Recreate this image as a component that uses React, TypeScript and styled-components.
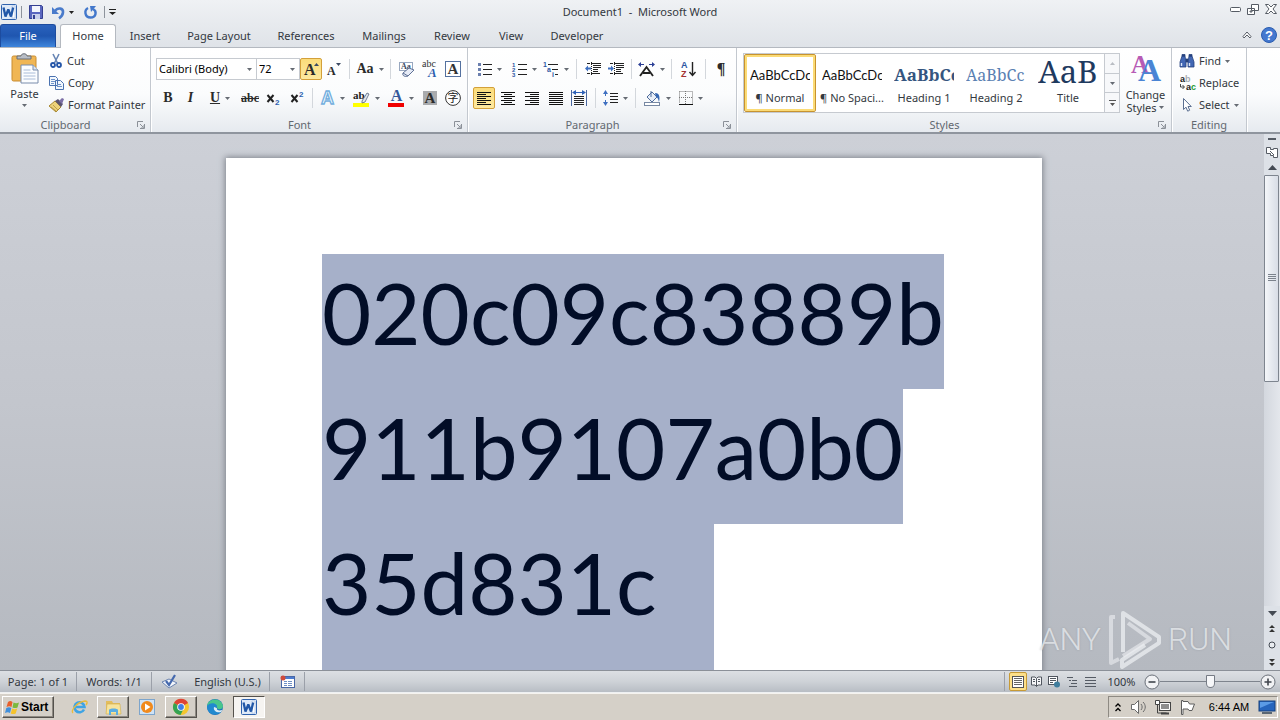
import React from 'react';
import styled, { createGlobalStyle, css } from 'styled-components';

const GlobalStyle = createGlobalStyle`
  * { box-sizing: border-box; }
  html, body, #root { height: 100%; }
  body {
    margin: 0;
    font-family: "Noto Sans", "Open Sans", sans-serif;
    font-size: 11px;
    line-height: 14px;
    color: #333840;
    overflow: hidden;
  }
  button, select, input { font: inherit; color: inherit; margin: 0; }
  svg { display: block; flex: none; overflow: visible; }
`;

/* ---------- window frame ---------- */

const Window = styled.div`
  display: flex;
  flex-direction: column;
  height: 100%;
`;

const TopChrome = styled.header`
  background: linear-gradient(#eff1f4, #dfe3e8);
`;

const TitleBar = styled.div`
  display: grid;
  grid-template-columns: 1fr auto 1fr;
  align-items: center;
  height: 24px;
`;

const Title = styled.h1`
  margin: 0;
  font-size: 11px;
  font-weight: 400;
  white-space: pre;
`;

const QuickAccess = styled.div`
  display: flex;
  align-items: center;
  gap: 4px;
  padding-left: 1px;
`;

const PlainButton = styled.button<{ $w?: number }>`
  display: flex;
  align-items: center;
  justify-content: center;
  gap: 4px;
  width: ${p => (p.$w ? `${p.$w}px` : 'auto')};
  padding: 0;
  border: 0;
  background: none;
  white-space: nowrap;
`;

const ThinRule = styled.span`
  width: 1px;
  height: 12px;
  background: #8d939c;
`;

const WindowControls = styled.div`
  display: flex;
  justify-content: flex-end;
  align-items: center;
  gap: 6px;
  padding: 0 3px 6px 0;
`;

const TabBar = styled.nav`
  display: flex;
  align-items: flex-end;
  height: 24px;
  border-bottom: 1px solid #b4b9c0;
`;

const Tab = styled.button<{ $w: number; $kind?: 'file' | 'active' }>`
  width: ${p => p.$w}px;
  height: 23px;
  padding: 0;
  border: 1px solid transparent;
  border-bottom: 0;
  border-radius: 3px 3px 0 0;
  background: none;
  ${p => p.$kind === 'file' && css`
    margin-right: 4px;
    color: #fff;
    border-color: #1d4c9f;
    background: linear-gradient(#2a62bd, #1f56b0 50%, #3f86dc);
  `}
  ${p => p.$kind === 'active' && css`
    height: 24px;
    margin-bottom: -1px;
    padding-bottom: 1px;
    border-color: #b4b9c0;
    background: #fff;
  `}
`;

const TabBarEnd = styled.div`
  display: flex;
  align-items: center;
  gap: 9px;
  height: 24px;
  margin-left: auto;
  padding-right: 3px;
`;

/* ---------- ribbon ---------- */

const Ribbon = styled.div`
  display: flex;
  height: 86px;
  background: linear-gradient(#fff, #fbfcfd 55%, #e6eaef);
  border-bottom: 2px solid #8f959e;
`;

const Group = styled.section<{ $w: number }>`
  display: flex;
  flex-direction: column;
  width: ${p => p.$w}px;
  border-right: 1px solid #c3c8cf;
  box-shadow: 1px 0 0 #fff;
`;

const GroupBody = styled.div`
  display: flex;
  flex: 1;
  min-height: 0;
`;

const GroupFooter = styled.div`
  display: flex;
  align-items: center;
  height: 15px;
  text-align: center;
  color: #626870;
`;

const GroupName = styled.span`
  flex: 1;
`;

const ToolRows = styled.div<{ $left: number }>`
  display: flex;
  flex-direction: column;
  gap: 7px;
  padding: 10px 0 0 ${p => p.$left}px;
`;

const ToolRow = styled.div`
  display: flex;
  align-items: center;
  height: 22px;
`;

const Tool = styled.button<{ $w: number; $on?: boolean }>`
  display: flex;
  align-items: center;
  justify-content: center;
  gap: 5px;
  width: ${p => p.$w}px;
  height: 22px;
  padding: 0;
  border: 1px solid transparent;
  border-radius: 2px;
  background: none;
  ${p => p.$on && css`
    border-color: #d3a03a;
    background: linear-gradient(#fbdc7a, #fde9a0);
  `}
`;

const ToolSeparator = styled.span<{ $w: number }>`
  display: flex;
  justify-content: center;
  width: ${p => p.$w}px;
  height: 20px;
  &::before {
    content: '';
    width: 1px;
    background: #d3d7dc;
  }
`;

const Glyph = styled.span<{ $size?: number }>`
  font-family: "Liberation Serif", serif;
  font-size: ${p => p.$size ?? 14}px;
  font-weight: 700;
  line-height: 14px;
  color: #2b2b2b;
`;

const StruckGlyph = styled(Glyph)`
  text-decoration: line-through;
`;

const ItalicGlyph = styled(Glyph)`
  font-style: italic;
`;

const UnderlinedGlyph = styled(Glyph)`
  text-decoration: underline;
`;

const ComboBox = styled.label<{ $w: number }>`
  display: flex;
  align-items: center;
  width: ${p => p.$w}px;
  height: 22px;
  padding-right: 4px;
  border: 1px solid #c6cad0;
  background: #fff;
  & + & { margin-left: -1px; }
`;

const ComboSelect = styled.select`
  flex: 1;
  min-width: 0;
  padding: 0 0 0 2px;
  border: 0;
  outline: 0;
  background: none;
  appearance: none;
  color: #000;
`;

const PasteButton = styled.button`
  display: flex;
  flex-direction: column;
  align-items: center;
  gap: 3px;
  width: 49px;
  padding: 5px 0 0;
  border: 0;
  background: none;
`;

const CommandList = styled.div<{ $left: number }>`
  display: flex;
  flex-direction: column;
  gap: 8px;
  padding: 6px 0 0 ${p => p.$left}px;
`;

const Command = styled.button`
  display: flex;
  align-items: center;
  gap: 4px;
  height: 14px;
  padding: 0;
  border: 0;
  background: none;
  white-space: nowrap;
`;

const Gallery = styled.div`
  display: flex;
  align-self: flex-start;
  height: 60px;
  margin: 5px 0 0 6px;
  border: 1px solid #c6cad0;
  background: #fff;
`;

const StyleCard = styled.button<{ $on?: boolean }>`
  display: flex;
  flex-direction: column;
  align-items: center;
  justify-content: flex-end;
  gap: 1px;
  width: 72px;
  height: 58px;
  padding: 0 4px 5px;
  border: 2px solid transparent;
  border-radius: 2px;
  background: none;
  ${p => p.$on && css`
    border: 1px solid #c7932f;
    padding: 0 5px 6px;
    box-shadow: inset 0 0 0 2px #fbdb76;
  `}
`;

const StylePreview = styled.span<{ $color: string; $size: number; $serif?: boolean; $bold?: boolean; $h?: number }>`
  width: 60px;
  height: ${p => p.$h ?? 30}px;
  overflow: hidden;
  text-align: left;
  white-space: nowrap;
  font-family: ${p => (p.$serif ? '"Noto Serif", "DejaVu Serif", "Liberation Serif", serif' : 'Lato, sans-serif')};
  font-size: ${p => p.$size}px;
  font-weight: ${p => (p.$bold ? 700 : 400)};
  line-height: 30px;
  color: ${p => p.$color};
`;

const StyleLabel = styled.span`
  white-space: nowrap;
`;

const GalleryScroll = styled.div`
  display: flex;
  flex-direction: column;
  width: 15px;
  border-left: 1px solid #c6cad0;
`;

const GalleryScrollButton = styled.button`
  display: flex;
  flex: 1;
  align-items: center;
  justify-content: center;
  padding: 0;
  border: 0;
  background: #f7f8fa;
  & + & { border-top: 1px solid #c6cad0; }
`;

const ChangeStyles = styled.button`
  display: flex;
  flex-direction: column;
  align-items: center;
  flex: 1;
  padding: 6px 0 0;
  border: 0;
  background: none;
  line-height: 13px;
  gap: 5px;
`;

const InlineCaret = styled.span`
  display: inline-flex;
  align-items: center;
  gap: 3px;
`;

/* ---------- document ---------- */

const Workspace = styled.div`
  position: relative;
  display: flex;
  flex: 1;
  min-height: 0;
  background: linear-gradient(#cdd0d7, #c3c6cd 50%, #b5b9c0);
`;

const Canvas = styled.main`
  display: flex;
  flex: 1;
  justify-content: center;
  min-width: 0;
  padding: 24px 0 0 4px;
  overflow: hidden;
`;

const Page = styled.article`
  flex: none;
  width: 816px;
  min-height: 1056px;
  padding: 96px;
  background: #fff;
  box-shadow: 0 0 6px 1px #7f848c;
`;

const SelectedLine = styled.div<{ $tail?: boolean }>`
  width: fit-content;
  height: ${p => (p.$tail ? 270 : 135)}px;
  padding-right: ${p => (p.$tail ? 57 : 0)}px;
  font-family: Lato, sans-serif;
  font-size: 85px;
  line-height: 116px;
  white-space: nowrap;
  color: #020d27;
  background: #a6b0c9;
`;

const ScrollRail = styled.div`
  display: flex;
  flex-direction: column;
  align-items: center;
  width: 16px;
  background: #dfe3e9;
`;

const RailButton = styled.button<{ $h: number }>`
  display: flex;
  align-items: center;
  justify-content: center;
  width: 16px;
  height: ${p => p.$h}px;
  padding: 0;
  border: 0;
  background: #dde1e7;
`;

const RailTrack = styled.div`
  flex: 1;
  width: 16px;
  background: linear-gradient(90deg, #d3d7de, #e4e7ec);
`;

const RailThumb = styled.div`
  display: flex;
  align-items: center;
  justify-content: center;
  width: 15px;
  height: 48%;
  border: 1px solid #7e858f;
  border-radius: 1px;
  background: linear-gradient(90deg, #f4f6f9, #e3e7ee 60%, #d8dde6);
`;

const Watermark = styled.div`
  position: absolute;
  right: 48px;
  bottom: 0;
  display: flex;
  align-items: center;
  gap: 6px;
  font-family: Roboto, sans-serif;
  font-size: 32px;
  font-weight: 300;
  line-height: 60px;
  color: rgba(236, 239, 242, 0.75);
  text-shadow: 0 0 2px rgba(120, 125, 132, 0.4);
`;

/* ---------- status bar ---------- */

const StatusBar = styled.footer`
  display: flex;
  align-items: center;
  height: 23px;
  border-top: 1px solid #8b9098;
  border-bottom: 1px solid #eef0f2;
  background: linear-gradient(#dcdfe3, #ced2d7 50%, #b8bdc4);
`;

const StatusItem = styled.button<{ $w: number }>`
  display: flex;
  align-items: center;
  justify-content: center;
  width: ${p => p.$w}px;
  height: 19px;
  padding: 0;
  border: 0;
  border-right: 1px solid #9ba0a9;
  background: none;
  white-space: nowrap;
`;

const ViewControls = styled.div`
  display: flex;
  align-items: center;
  height: 19px;
  margin-left: auto;
  padding: 0 4px;
  border-left: 1px solid #9ba0a9;
`;

const ViewButton = styled.button<{ $on?: boolean }>`
  display: flex;
  align-items: center;
  justify-content: center;
  width: 18px;
  height: 19px;
  padding: 0;
  border: 1px solid ${p => (p.$on ? '#c79a35' : 'transparent')};
  border-radius: 2px;
  background: ${p => (p.$on ? '#fde08a' : 'none')};
`;

const ZoomLevel = styled.button`
  width: 45px;
  padding: 0;
  border: 0;
  background: none;
`;

const ZoomSlider = styled.input`
  width: 100px;
  height: 16px;
  appearance: none;
  background: linear-gradient(#7e848d, #7e848d) center / 100% 1px no-repeat;
  &::-webkit-slider-thumb {
    appearance: none;
    width: 9px;
    height: 13px;
    border: 1px solid #757b84;
    border-radius: 1px 1px 5px 5px;
    background: #f6f7f9;
  }
`;

/* ---------- taskbar ---------- */

const Taskbar = styled.nav`
  display: flex;
  align-items: center;
  height: 27px;
  padding: 0 2px;
  border-top: 1px solid #f5f3ef;
  background: #d5d0c8;
`;

const raised = css`
  border: 1px solid;
  border-color: #fff #55524d #55524d #fff;
  box-shadow: inset -1px -1px 0 #8e8a83;
`;

const StartButton = styled.button`
  display: flex;
  align-items: center;
  gap: 1px;
  width: 52px;
  height: 22px;
  margin-right: 8px;
  padding: 0 2px;
  background: #d5d0c8;
  color: #000;
  font-family: "Liberation Sans", sans-serif;
  font-size: 12px;
  font-weight: 700;
  ${raised}
`;

const TaskButton = styled.button<{ $state?: 'open' | 'front' }>`
  display: flex;
  align-items: center;
  justify-content: center;
  width: ${p => (p.$state ? 32 : 34)}px;
  height: 22px;
  margin: 0 ${p => (p.$state ? 1 : 0)}px;
  padding: 0;
  border: 1px solid transparent;
  background: none;
  ${p => p.$state === 'open' && raised}
  ${p => p.$state === 'front' && css`
    border-color: #55524d #fff #fff #55524d;
    background: #f6f4f1;
  `}
`;

const Tray = styled.div`
  display: flex;
  align-items: center;
  height: 22px;
  margin-left: auto;
  border: 1px solid;
  border-color: #8e8a83 #fff #fff #8e8a83;
  color: #000;
`;

const TrayButton = styled.button<{ $w: number }>`
  display: flex;
  align-items: center;
  justify-content: center;
  width: ${p => p.$w}px;
  height: 20px;
  padding: 0;
  border: 0;
  background: none;
`;

const Clock = styled.time`
  width: 56px;
  font-family: "Liberation Sans", sans-serif;
  text-align: center;
  white-space: nowrap;
`;

/* ---------- drawings ---------- */

const Caret = ({ color = '#666b73', up = false }: { color?: string; up?: boolean }) => (
  <svg width="5" height="3" viewBox="0 0 5 3"><path d={up ? 'M0 3h5L2.5 0z' : 'M0 0h5L2.5 3z'} fill={color} /></svg>
);

const Launcher = () => (
  <svg width="8" height="8" viewBox="0 0 8 8" fill="none" stroke="#8b9098">
    <path d="M.5 6V.5H6M3 3l3 3M7.5 3v4.5H3M7 4v3H4" />
  </svg>
);

const WordIcon = ({ size = 16 }: { size?: number }) => (
  <svg width={size} height={size} viewBox="0 0 16 16">
    <rect x=".5" y=".5" width="15" height="15" rx="1" fill="#dfeaf8" stroke="#2f62ad" />
    <rect x="11" y="2" width="3" height="12" fill="#fff" stroke="#8aabda" strokeWidth=".5" />
    <path d="M2.500 3.500l2 9L7.300 5.500 10 12.500l2.200-9" fill="none" stroke="#2258a8" strokeWidth="2.300" strokeLinejoin="bevel" />
  </svg>
);

const SaveIcon = () => (
  <svg width="14" height="14" viewBox="0 0 14 14">
    <path d="M.5.5h12l1 1v12H.5z" fill="#5a66bf" stroke="#343f91" />
    <rect x="3" y="1" width="8" height="6" fill="#f3f5fc" /><rect x="3" y="9" width="8" height="5" fill="#c9cfeb" /><rect x="4" y="10" width="2" height="4" fill="#343f91" />
  </svg>
);

const UndoIcon = () => (
  <svg width="13" height="13" viewBox="0 0 13 13">
    <path d="M2.500 5.500C6 1 11.500 2 11 6.500 10.700 9 9 11 7 12.300" fill="none" stroke="#4a7bcb" strokeWidth="2.600" />
    <path d="M0 1v7h7z" fill="#4a7bcb" />
  </svg>
);

const RedoIcon = () => (
  <svg width="13" height="13" viewBox="0 0 13 13">
    <path d="M4 2C0 4 .5 11.500 6.500 11.500S13 5 9 3" fill="none" stroke="#4277cb" strokeWidth="2.400" />
    <path d="M6 0h6L7 6z" fill="#4277cb" />
  </svg>
);

const PasteIcon = () => (
  <svg width="28" height="31" viewBox="0 0 28 31">
    <rect x="1" y="3" width="24" height="25" rx="1.500" fill="#f0b654" stroke="#c88c31" />
    <path d="M6 6V3h4c0-3 6-3 6 0h4v3z" fill="#b9bec6" stroke="#686e77" />
    <path d="M10 12h12l5 5v13H10z" fill="#fbfdff" stroke="#788cab" />
    <path d="M22 12v5h5" fill="#dbe5f2" stroke="#788cab" />
    <path d="M12.500 17h7M12.500 20h12M12.500 23h12M12.500 26h12" stroke="#a9bcd8" />
  </svg>
);

const CutIcon = () => (
  <svg width="14" height="14" viewBox="0 0 14 14" fill="none">
    <path d="M4 0l4.500 9M10 0L5.500 9" stroke="#6886b5" strokeWidth="1.600" />
    <circle cx="4" cy="11" r="2" stroke="#2456a8" strokeWidth="1.800" /><circle cx="10" cy="11" r="2" stroke="#2456a8" strokeWidth="1.800" />
  </svg>
);

const CopyIcon = () => (
  <svg width="15" height="14" viewBox="0 0 15 14" fill="#f2f7fd" stroke="#4a72b0">
    <path d="M.5.5h6l2 2v7h-8zM6.500 4.500h5l3 3v6h-8z" />
    <path d="M2 3.500h4M2 5.500h4M2 7.500h3M8 8.500h4M8 10.500h5" stroke="#6e93c9" />
  </svg>
);

const BrushIcon = () => (
  <svg width="15" height="14" viewBox="0 0 15 14">
    <path d="M0 8l6-5 6 6-5 5z" fill="#ecd27a" stroke="#a98a35" />
    <path d="M2 9l5 4M4 7l5 5" stroke="#a98a35" strokeWidth=".7" />
    <path d="M6 3l3-2 5 5-2 3z" fill="#5a5471" /><path d="M10 3l3-3 2 1-2 5z" fill="#7c6fa6" />
  </svg>
);

const EraserIcon = () => (
  <svg width="17" height="17" viewBox="0 0 17 17">
    <rect x="1.500" y="1.500" width="13" height="8" fill="#fff" stroke="#98a7bf" />
    <text x="3" y="8" fontSize="8" fontWeight="700" fontFamily="Liberation Serif, serif" fill="#38465f">Aa</text>
    <path d="M5 12l6-5 5 2-6 6c-3 1-6 0-5-3z" fill="#e6ebf6" stroke="#5f7196" />
    <path d="M5 12l5 3" stroke="#5f7196" />
  </svg>
);

const PhoneticIcon = () => (
  <svg width="17" height="17" viewBox="0 0 17 17">
    <text x="0" y="6" fontSize="10" fontFamily="Liberation Serif, serif" fill="#333">abc</text>
    <text x="6" y="16" fontSize="13" fontStyle="italic" fontWeight="700" fontFamily="Liberation Serif, serif" fill="#2d5fb0">A</text>
  </svg>
);

const BoxedIcon = () => (
  <svg width="16" height="16" viewBox="0 0 16 16">
    <rect x=".5" y=".5" width="15" height="15" fill="#fff" stroke="#54719f" />
    <text x="8" y="13" textAnchor="middle" fontSize="15" fontWeight="700" fontFamily="Liberation Serif, serif" fill="#333">A</text>
  </svg>
);

const ShadedIcon = () => (
  <svg width="14" height="14" viewBox="0 0 14 14">
    <rect width="14" height="14" fill="#a9abae" />
    <text x="7" y="12" textAnchor="middle" fontSize="15" fontWeight="700" fontFamily="Liberation Serif, serif" fill="#2b2b2b">A</text>
  </svg>
);

const CircledIcon = () => (
  <svg width="16" height="16" viewBox="0 0 16 16">
    <circle cx="8" cy="8" r="7.400" fill="#fff" stroke="#333" />
    <text x="8" y="12" textAnchor="middle" fontSize="11" fontFamily="Noto Sans CJK SC, sans-serif" fill="#222">字</text>
  </svg>
);

const TextEffectIcon = () => (
  <svg width="15" height="16" viewBox="0 0 15 16">
    <text x="7.500" y="14" textAnchor="middle" fontSize="18" fontWeight="700" fontFamily="Liberation Sans, sans-serif" fill="#f4faff" stroke="#72aedd" strokeWidth="1.300">A</text>
  </svg>
);

const HighlightIcon = () => (
  <svg width="17" height="17" viewBox="0 0 17 17">
    <rect x="0" y="13" width="16" height="4" fill="#ffff00" />
    <text x="0" y="9" fontSize="11" fontFamily="Liberation Serif, serif" fontWeight="700" fill="#222">ab</text>
    <path d="M9 11l5-8 2 1-4 8-3 1z" fill="#dfe5ee" stroke="#55647e" strokeWidth=".8" />
  </svg>
);

const FontColorIcon = () => (
  <svg width="16" height="17" viewBox="0 0 16 17">
    <rect x="0" y="13" width="16" height="4" fill="#f00000" />
    <text x="8.500" y="11" textAnchor="middle" fontSize="16" fontFamily="Liberation Serif, serif" fontWeight="700" fill="#35589a">A</text>
  </svg>
);

const ScriptIcon = ({ up }: { up?: boolean }) => (
  <svg width="14" height="14" viewBox="0 0 14 14">
    <path d="M1.500 4l6 7M7.500 4l-6 7" stroke="#222" strokeWidth="2" />
    <text x="9" y={up ? 6 : 14} fontSize="8" fontWeight="700" fontFamily="Liberation Sans, sans-serif" fill="#2d5fb0">2</text>
  </svg>
);

const GrowIcon = ({ size, up }: { size: number; up?: boolean }) => (
  <svg width="15" height="16" viewBox="0 0 15 16">
    <text x="0" y="14" fontSize={size} fontWeight="700" fontFamily="Liberation Serif, serif" fill="#2b2b2b">A</text>
    <path d={up ? 'M10 5h5l-2.500-3z' : 'M9 2h5l-2.500 3z'} fill="#3c4a63" />
  </svg>
);

const BulletsIcon = () => (
  <svg width="14" height="14" viewBox="0 0 14 14">
    <path d="M5 2.500h9M5 7.500h9M5 12.500h9" stroke="#222" />
    <path d="M0 1h3v3H0zM0 6h3v3H0zM0 11h3v3H0z" fill="#6b7fae" />
  </svg>
);

const NumbersIcon = () => (
  <svg width="15" height="15" viewBox="0 0 15 15">
    <path d="M6 2.500h9M6 7.500h9M6 12.500h9" stroke="#222" />
    <g fontSize="6" fontWeight="700" fontFamily="Liberation Sans, sans-serif" fill="#2b55a2"><text x="0" y="5">1</text><text x="0" y="10">2</text><text x="0" y="15">3</text></g>
  </svg>
);

const MultilevelIcon = () => (
  <svg width="16" height="15" viewBox="0 0 16 15">
    <path d="M5 2.500h10M9 7.500h6M12 12.500h3" stroke="#222" />
    <g fontSize="7" fontWeight="700" fontFamily="Liberation Sans, sans-serif" fill="#2b55a2"><text x="0" y="5">1</text><text x="4" y="10">a</text><text x="9" y="15">i</text></g>
  </svg>
);

const IndentIcon = ({ out }: { out?: boolean }) => (
  <svg width="16" height="14" viewBox="0 0 16 14">
    <path d="M2 1.500h3M6 1.500h10M8 3.500h8M8 5.500h8M8 7.500h5M8 9.500h5M2 11.500h3M6 11.500h9" stroke="#222" />
    <path d="M6.500 0v14" stroke="#222" strokeDasharray="1 1" />
    <path d={out ? 'M0 6.500l3-3v2h3v2H3v2z' : 'M6 6.500l-3-3v2H0v2h3v2z'} fill="#3e6fc0" />
  </svg>
);

const AsianLayoutIcon = () => (
  <svg width="17" height="15" viewBox="0 0 17 15" fill="none" stroke="#222">
    <path d="M2 14L8.500 5 15 14M5 11h7" strokeWidth="1.900" />
    <path d="M1 2.500h5M11 2.500h5" stroke="#2b3f96" />
    <path d="M3 0v5L0 2.500zM14 0v5l3-2.500z" fill="#2b3f96" stroke="none" />
  </svg>
);

const SortIcon = () => (
  <svg width="15" height="16" viewBox="0 0 15 16">
    <text x="0" y="7" fontSize="9" fontWeight="700" fontFamily="Liberation Sans, sans-serif" fill="#2b55a2">A</text>
    <text x="0" y="16" fontSize="9" fontWeight="700" fontFamily="Liberation Sans, sans-serif" fill="#a33232">Z</text>
    <path d="M11.500 1v13M8.500 11l3 3.500 3-3.500" fill="none" stroke="#222" strokeWidth="1.400" />
  </svg>
);

const alignPaths = {
  left: 'M0 .5h14M0 2.500h9M0 4.500h14M0 6.500h9M0 8.500h14M0 10.500h9M0 12.500h14',
  center: 'M0 .5h14M3 2.500h8M0 4.500h14M3 6.500h8M0 8.500h14M3 10.500h8M0 12.500h14',
  right: 'M0 .5h14M5 2.500h9M0 4.500h14M5 6.500h9M0 8.500h14M5 10.500h9M0 12.500h14',
  justify: 'M0 .5h14M0 2.500h14M0 4.500h14M0 6.500h14M0 8.500h14M0 10.500h14M0 12.500h14',
};

const AlignIcon = ({ kind }: { kind: keyof typeof alignPaths }) => (
  <svg width="14" height="13" viewBox="0 0 14 13"><path d={alignPaths[kind]} stroke="#111" /></svg>
);

const DistributeIcon = () => (
  <svg width="16" height="16" viewBox="0 0 16 16" fill="none">
    <path d="M.5 0v16M15.500 0v16" stroke="#4b68a0" />
    <path d="M2 2.500h12" stroke="#2f62b8" /><path d="M5 0v5L1 2.500zM11 0v5l4-2.500z" fill="#2f62b8" />
    <path d="M3 6.500h10M3 8.500h10M3 10.500h10M3 12.500h10M3 14.500h10" stroke="#222" />
  </svg>
);

const SpacingIcon = () => (
  <svg width="15" height="16" viewBox="0 0 15 16">
    <path d="M7 3.500h8M7 6.500h8M7 9.500h8M7 12.500h8" stroke="#222" />
    <path d="M2.500 0l2.500 4H0zM2.500 16L0 12h5zM2 4h1v2H2zM2 10h1v2H2z" fill="#3e6fc0" />
  </svg>
);

const BucketIcon = () => (
  <svg width="17" height="16" viewBox="0 0 17 16">
    <path d="M3 7l5-5 5 5-5 5z" fill="#e8eef7" stroke="#4f6c9c" />
    <path d="M7 1v6" stroke="#4f6c9c" /><path d="M11 3c5 0 5 5 4 9-1-4-2-5-3-5z" fill="#3466b2" />
    <rect x=".5" y="12.500" width="15" height="3" fill="#fff" stroke="#7788a3" />
  </svg>
);

const BordersIcon = () => (
  <svg width="14" height="14" viewBox="0 0 14 14" fill="none">
    <path d="M.5.5h13v12M.5.5v12M6.500 0v13M0 6.500h13" stroke="#777" strokeDasharray="1 1" />
    <path d="M0 13.500h14" stroke="#111" />
  </svg>
);

const ChangeStylesIcon = () => (
  <svg width="32" height="29" viewBox="0 0 32 29" fontFamily="Liberation Serif, serif" fontWeight="700">
    <text x="1" y="19" fontSize="25" fill="#b75bb5">A</text>
    <text x="8" y="27" fontSize="32" fill="#4a84d4">A</text>
  </svg>
);

const BinocularsIcon = () => (
  <svg width="16" height="14" viewBox="0 0 16 14" stroke="#26437f" strokeWidth=".8">
    <path d="M1 8l2-6h3l1 6v5H1zM9 8l1-6h3l2 6v5H9z" fill="#4267b4" />
    <path d="M7 5h2v3H7zM3 .5h3V2H3zM10 .5h3V2h-3z" fill="#26437f" /><path d="M2.500 9v3M10.500 9v3" stroke="#dce7fb" strokeWidth="1.400" />
  </svg>
);

const ReplaceIcon = () => (
  <svg width="16" height="15" viewBox="0 0 16 15" fontFamily="Liberation Sans, sans-serif" fontWeight="700">
    <text x="1" y="6" fontSize="9" fill="#222">a</text><text x="6" y="6" fontSize="9" fill="#a9adb3">b</text>
    <text x="7" y="14" fontSize="9" fill="#222">a</text><text x="12" y="14" fontSize="9" fill="#239b35">c</text>
    <path d="M1.500 8v3H5M3.500 9l2 2-2 2" fill="none" stroke="#333" strokeWidth=".9" />
  </svg>
);

const PointerIcon = () => (
  <svg width="16" height="14" viewBox="0 0 16 14"><path d="M4.500 .5v11l2.500-2.300 1.700 4 2-1-1.700-3.700h3.300z" fill="#fff" stroke="#5b6f91" /></svg>
);

const AnyRunIcon = () => (
  <svg width="55" height="62" viewBox="0 0 55 62" fill="none" stroke="currentColor" strokeWidth="4" strokeLinejoin="round">
    <path d="M16 44V5l36 24v6L15 59v-7l23-15" />
    <path d="M8 9H4v46l8-4M21 15l22 16-27 17" opacity=".8" />
  </svg>
);

const ProofIcon = () => (
  <svg width="17" height="15" viewBox="0 0 17 15">
    <path d="M1 8l7-3 8 4-8 5z" fill="#f3f6fb" stroke="#6b84b0" /><path d="M5 7l3 4 6-10" fill="none" stroke="#4569ae" strokeWidth="2.200" />
  </svg>
);

const MacroIcon = () => (
  <svg width="15" height="13" viewBox="0 0 15 13">
    <rect x="1.500" y="1.500" width="13" height="11" fill="#fff" stroke="#4967a5" /><path d="M2 3h12" stroke="#4d7cd0" strokeWidth="2" />
    <path d="M4 6.500h3M8 6.500h4M4 8.500h3M8 8.500h4M4 10.500h3M8 10.500h4" stroke="#6f8fc5" /><circle cx="3" cy="3" r="2.500" fill="#d04b3c" />
  </svg>
);

const PageViewIcon = () => (
  <svg width="12" height="12" viewBox="0 0 12 12"><rect x=".5" y=".5" width="11" height="11" fill="#fff" stroke="#555" /><path d="M2 2.500h8M2 4.500h8M2 6.500h8M2 8.500h8" stroke="#666" /></svg>
);

const BookIcon = () => (
  <svg width="11" height="11" viewBox="0 0 11 11" fill="#f5f6f8" stroke="#50565f"><path d="M.5 1h3.500L5.500 2.500 7 1h3.500v8H7L5.500 10.500 4 9H.5zM5.500 2.500v8M2 3.500h2M2 5.500h2M7 3.500h2M7 5.500h2" /></svg>
);

const WebIcon = () => (
  <svg width="12" height="12" viewBox="0 0 12 12"><rect x=".5" y=".5" width="9" height="8" fill="#fff" stroke="#50565f" /><path d="M2 2.500h6M2 4.500h6M2 6.500h3" stroke="#50565f" /><circle cx="9" cy="8.500" r="3" fill="#3f7d9d" /></svg>
);

const OutlineIcon = () => (
  <svg width="11" height="10" viewBox="0 0 11 10"><path d="M0 .5h6M2 3.500h2M5 3.500h5M4 6.500h6M2 9.500h8" stroke="#555b64" /></svg>
);

const DraftIcon = () => (
  <svg width="11" height="10" viewBox="0 0 11 10"><path d="M0 .5h11M0 3.500h11M0 6.500h11M0 9.500h11" stroke="#555b64" /></svg>
);

const ZoomKnob = ({ plus }: { plus?: boolean }) => (
  <svg width="16" height="16" viewBox="0 0 16 16"><circle cx="8" cy="8" r="7" fill="#f1f2f4" stroke="#6b717a" /><path d={plus ? 'M4.500 8h7M8 4.500v7' : 'M4.500 8h7'} stroke="#40454d" strokeWidth="1.600" /></svg>
);

const WindowsFlag = () => (
  <svg width="15" height="15" viewBox="0 0 15 15">
    <path d="M3 2c2-1.500 3-1 4.500 0L6.500 7C5 6 3.500 6 1.500 7z" fill="#e8602c" /><path d="M8.500 2.500c2 1 3.500 1 5.500 0l-1.500 5c-2 1-3.500.5-5 0z" fill="#7cb93e" />
    <path d="M1.300 8c2-1 3.500-1 5 0L5 13C3.500 12 2 12 0 13z" fill="#3f8fdc" /><path d="M7.200 8.500c2 1 3 1 5 0l-1.500 5c-2 1-3.500.5-5 0z" fill="#f5c32c" />
  </svg>
);

const IeIcon = () => (
  <svg width="17" height="16" viewBox="0 0 17 16" fill="none"><path d="M13 10.500A5 5 0 1 1 13.500 8H5" stroke="#3fa4e4" strokeWidth="2.600" /><path d="M2 14C-1 12 6 3 14 2c4 0 1 4 1 4" stroke="#e9bb3c" strokeWidth="1.400" /></svg>
);

const FolderIcon = () => (
  <svg width="17" height="15" viewBox="0 0 17 15"><path d="M1 1h6l1 2h7v10H1z" fill="#e3bd5b" /><path d="M2 4h13l1 10H1z" fill="#f7e39b" stroke="#d0ad4d" strokeWidth=".6" /><path d="M4 15v-5c0-2 9-2 9 0v5h-2v-3H6v3z" fill="#5caee2" /></svg>
);

const PlayerIcon = () => (
  <svg width="16" height="16" viewBox="0 0 16 16"><rect x=".5" y=".5" width="15" height="15" fill="#cfe3f6" stroke="#7da5cc" /><circle cx="8" cy="8" r="6" fill="#f08a1d" /><path d="M6 4.500v7L11.500 8z" fill="#fff" /></svg>
);

const ChromeIcon = () => (
  <svg width="16" height="16" viewBox="0 0 16 16"><circle cx="8" cy="8" r="8" fill="#f4c62f" /><path d="M8 8L1 4a8 8 0 0 1 14 0z" fill="#de4437" /><path d="M8 8L1 4a8 8 0 0 0 6.500 12L11 9z" fill="#35a354" /><circle cx="8" cy="8" r="3.800" fill="#fff" /><circle cx="8" cy="8" r="2.900" fill="#3f7fe8" /></svg>
);

const EdgeIcon = () => (
  <svg width="16" height="16" viewBox="0 0 16 16"><circle cx="8" cy="8" r="8" fill="#1c72bb" /><path d="M0 7c1-8 14-9 16 0 0 4-5 4-6 2 1-3-5-5-10-2z" fill="#49c58c" /><path d="M0 7c4-5 11-2 10 1-3 0-2 5 4 5C8 18 0 15 0 7z" fill="#2189cf" /><path d="M7 8c-1 4 3 6 7 5 1-1 1-2 1-2-3 1-6 0-5-2z" fill="#dcecf6" /></svg>
);

const SpeakerIcon = () => (
  <svg width="16" height="16" viewBox="0 0 16 16" fill="#fff" stroke="#6a6a6a"><path d="M.5 5.500h3l4-4v13l-4-4h-3z" /><path d="M10 5c1.500 2 1.500 4 0 6M12 3c3 3 3 7 0 10" fill="none" /></svg>
);

const NetworkIcon = () => (
  <svg width="16" height="15" viewBox="0 0 16 15"><rect x="4.500" y="2.500" width="11" height="8" fill="#8e8e8e" stroke="#444" /><path d="M5.500 3.500h9v6h-9z" fill="none" stroke="#fff" /><path d="M.5.500h4v4h-4z" fill="#fff" stroke="#444" /><path d="M2.500 4v9h9" fill="none" stroke="#444" /><path d="M6 13.500h8" stroke="#444" strokeWidth="2" /></svg>
);

const FlagIcon = () => (
  <svg width="16" height="15" viewBox="0 0 16 15" fill="#fff" stroke="#5c5c5c"><path d="M1.500 .5v14h1.500V9h5l1 1.500h3L14.500 4H9.500L8 1.500H3V.5z" /></svg>
);

const DesktopIcon = () => (
  <svg width="16" height="13" viewBox="0 0 16 13"><rect width="16" height="10" fill="#2665bd" stroke="#16407d" /><path d="M1 1h14L1 7z" fill="#5b9be6" /><path d="M3 12h10" stroke="#5b6773" strokeWidth="2" /></svg>
);

/* ---------- page ---------- */

const tabs: [string, number][] = [
  ['Insert', 58], ['Page Layout', 90], ['References', 84], ['Mailings', 72], ['Review', 64], ['View', 54], ['Developer', 78],
];

const Footer = ({ name, launcher = true }: { name: string; launcher?: boolean }) => (
  <GroupFooter>
    <GroupName>{name}</GroupName>
    {launcher && <PlainButton $w={19} aria-label={`${name} options`}><Launcher /></PlainButton>}
  </GroupFooter>
);

export default function App() {
  return (
    <Window>
      <GlobalStyle />
      <TopChrome>
        <TitleBar>
          <QuickAccess>
            <PlainButton aria-label="Word"><WordIcon /></PlainButton>
            <ThinRule />
            <PlainButton $w={20} aria-label="Save"><SaveIcon /></PlainButton>
            <PlainButton $w={26} aria-label="Undo"><UndoIcon /><Caret color="#222" /></PlainButton>
            <PlainButton $w={20} aria-label="Redo"><RedoIcon /></PlainButton>
            <ThinRule />
            <PlainButton aria-label="Customize toolbar">
              <svg width="7" height="6" viewBox="0 0 7 6"><path d="M0 0h7v1H0zM0 3h7L3.500 6z" fill="#222" /></svg>
            </PlainButton>
          </QuickAccess>
          <Title>{'Document1  -  Microsoft Word'}</Title>
          <WindowControls>
            <PlainButton aria-label="Minimize"><svg width="11" height="5" viewBox="0 0 11 5"><rect x=".5" y=".5" width="10" height="4" rx="1" fill="#fff" stroke="#565c65" /></svg></PlainButton>
            <PlainButton aria-label="Restore"><svg width="12" height="11" viewBox="0 0 12 11" fill="#fff" stroke="#565c65"><path d="M4.500.5h7v6h-7zM.5 4.500h7v6h-7zM3 7h2v1H3z" /></svg></PlainButton>
            <PlainButton aria-label="Close"><svg width="12" height="10" viewBox="0 0 12 10" fill="#fff" stroke="#565c65"><path d="M.5.5h3L6 3 8.500.5h3L8 5l3.500 4.500h-3L6 7 3.500 9.500h-3L4 5z" /></svg></PlainButton>
          </WindowControls>
        </TitleBar>
        <TabBar>
          <Tab $w={56} $kind="file">File</Tab>
          <Tab $w={56} $kind="active">Home</Tab>
          {tabs.map(([name, w]) => <Tab key={name} $w={w}>{name}</Tab>)}
          <TabBarEnd>
            <PlainButton aria-label="Minimize the ribbon"><svg width="10" height="8" viewBox="0 0 10 8"><path d="M1 5.500L5 1l4 4.500-1 1.500-3-3-3 3z" fill="#fff" stroke="#565c65" /></svg></PlainButton>
            <PlainButton aria-label="Help">
              <svg width="16" height="16" viewBox="0 0 16 16"><circle cx="8" cy="8" r="7.500" fill="#4478cf" stroke="#2b5daf" /><text x="8" y="12.500" textAnchor="middle" fontSize="13" fontWeight="700" fontFamily="Liberation Sans, sans-serif" fill="#fff">?</text></svg>
            </PlainButton>
          </TabBarEnd>
        </TabBar>
      </TopChrome>

      <Ribbon>
        <Group $w={151}>
          <GroupBody>
            <PasteButton><PasteIcon />Paste<Caret /></PasteButton>
            <CommandList $left={0}>
              <Command><CutIcon />Cut</Command>
              <Command><CopyIcon />Copy</Command>
              <Command><BrushIcon />Format Painter</Command>
            </CommandList>
          </GroupBody>
          <Footer name="Clipboard" />
        </Group>

        <Group $w={317}>
          <GroupBody>
            <ToolRows $left={5}>
              <ToolRow>
                <ComboBox $w={101}><ComboSelect aria-label="Font"><option>Calibri (Body)</option></ComboSelect><Caret /></ComboBox>
                <ComboBox $w={44}><ComboSelect aria-label="Font size"><option>72</option></ComboSelect><Caret /></ComboBox>
                <Tool $w={22} $on aria-label="Grow font"><GrowIcon size={16} up /></Tool>
                <Tool $w={24} aria-label="Shrink font"><GrowIcon size={12} /></Tool>
                <ToolSeparator $w={7} />
                <Tool $w={34} aria-label="Change case"><Glyph>Aa</Glyph><Caret /></Tool>
                <ToolSeparator $w={7} />
                <Tool $w={25} aria-label="Clear formatting"><EraserIcon /></Tool>
                <Tool $w={22} aria-label="Phonetic guide"><PhoneticIcon /></Tool>
                <Tool $w={24} aria-label="Character border"><BoxedIcon /></Tool>
              </ToolRow>
              <ToolRow>
                <Tool $w={24} aria-label="Bold"><Glyph>B</Glyph></Tool>
                <Tool $w={21} aria-label="Italic"><ItalicGlyph>I</ItalicGlyph></Tool>
                <Tool $w={38} aria-label="Underline"><UnderlinedGlyph>U</UnderlinedGlyph><Caret /></Tool>
                <Tool $w={22} aria-label="Strikethrough"><StruckGlyph $size={12}>abc</StruckGlyph></Tool>
                <Tool $w={24} aria-label="Subscript"><ScriptIcon /></Tool>
                <Tool $w={24} aria-label="Superscript"><ScriptIcon up /></Tool>
                <ToolSeparator $w={7} />
                <Tool $w={33} aria-label="Text effects"><TextEffectIcon /><Caret /></Tool>
                <Tool $w={35} aria-label="Highlight"><HighlightIcon /><Caret /></Tool>
                <Tool $w={34} aria-label="Font color"><FontColorIcon /><Caret /></Tool>
                <Tool $w={24} aria-label="Character shading"><ShadedIcon /></Tool>
                <Tool $w={22} aria-label="Enclose characters"><CircledIcon /></Tool>
              </ToolRow>
            </ToolRows>
          </GroupBody>
          <Footer name="Font" />
        </Group>

        <Group $w={269}>
          <GroupBody>
            <ToolRows $left={5}>
              <ToolRow>
                <Tool $w={34} aria-label="Bullets"><BulletsIcon /><Caret /></Tool>
                <Tool $w={34} aria-label="Numbering"><NumbersIcon /><Caret /></Tool>
                <Tool $w={30} aria-label="Multilevel list"><MultilevelIcon /><Caret /></Tool>
                <ToolSeparator $w={10} />
                <Tool $w={24} aria-label="Decrease indent"><IndentIcon out /></Tool>
                <Tool $w={21} aria-label="Increase indent"><IndentIcon /></Tool>
                <ToolSeparator $w={10} />
                <Tool $w={30} aria-label="Asian layout"><AsianLayoutIcon /><Caret /></Tool>
                <ToolSeparator $w={10} />
                <Tool $w={24} aria-label="Sort"><SortIcon /></Tool>
                <ToolSeparator $w={10} />
                <Tool $w={22} aria-label="Show paragraph marks"><Glyph $size={16}>¶</Glyph></Tool>
              </ToolRow>
              <ToolRow>
                <Tool $w={22} $on aria-label="Align left"><AlignIcon kind="left" /></Tool>
                <Tool $w={26} aria-label="Center"><AlignIcon kind="center" /></Tool>
                <Tool $w={22} aria-label="Align right"><AlignIcon kind="right" /></Tool>
                <Tool $w={26} aria-label="Justify"><AlignIcon kind="justify" /></Tool>
                <Tool $w={20} aria-label="Distribute"><DistributeIcon /></Tool>
                <ToolSeparator $w={12} />
                <Tool $w={29} aria-label="Line spacing"><SpacingIcon /><Caret /></Tool>
                <ToolSeparator $w={11} />
                <Tool $w={33} aria-label="Shading"><BucketIcon /><Caret /></Tool>
                <Tool $w={33} aria-label="Borders"><BordersIcon /><Caret /></Tool>
              </ToolRow>
            </ToolRows>
          </GroupBody>
          <Footer name="Paragraph" />
        </Group>

        <Group $w={435}>
          <GroupBody>
            <Gallery>
              <StyleCard $on><StylePreview $size={13} $color="#111">AaBbCcDc</StylePreview><StyleLabel>¶ Normal</StyleLabel></StyleCard>
              <StyleCard><StylePreview $size={13} $color="#111">AaBbCcDc</StylePreview><StyleLabel>¶ No Spaci...</StyleLabel></StyleCard>
              <StyleCard><StylePreview $size={17} $color="#35557f" $serif $bold>AaBbCc</StylePreview><StyleLabel>Heading 1</StyleLabel></StyleCard>
              <StyleCard><StylePreview $size={16} $color="#5a80b2" $serif>AaBbCc</StylePreview><StyleLabel>Heading 2</StyleLabel></StyleCard>
              <StyleCard><StylePreview $size={31} $color="#1f3a5f" $serif $h={36}>AaB</StylePreview><StyleLabel>Title</StyleLabel></StyleCard>
              <GalleryScroll>
                <GalleryScrollButton aria-label="Previous styles"><Caret up color="#b9bdc3" /></GalleryScrollButton>
                <GalleryScrollButton aria-label="Next styles"><Caret /></GalleryScrollButton>
                <GalleryScrollButton aria-label="More styles"><svg width="7" height="6" viewBox="0 0 7 6"><path d="M0 0h7v1H0zM1 3h5L3.500 6z" fill="#555" /></svg></GalleryScrollButton>
              </GalleryScroll>
            </Gallery>
            <ChangeStyles>
              <ChangeStylesIcon />
              <span>Change<br /><InlineCaret>Styles<Caret /></InlineCaret></span>
            </ChangeStyles>
          </GroupBody>
          <Footer name="Styles" />
        </Group>

        <Group $w={75}>
          <GroupBody>
            <CommandList $left={7}>
              <Command><BinocularsIcon />Find<Caret /></Command>
              <Command><ReplaceIcon />Replace</Command>
              <Command><PointerIcon />Select<Caret /></Command>
            </CommandList>
          </GroupBody>
          <Footer name="Editing" launcher={false} />
        </Group>
      </Ribbon>

      <Workspace>
        <Canvas>
          <Page>
            <SelectedLine>020c09c83889b</SelectedLine>
            <SelectedLine>911b9107a0b0</SelectedLine>
            <SelectedLine $tail>35d831c</SelectedLine>
          </Page>
        </Canvas>
        <ScrollRail>
          <RailButton $h={10} aria-label="Split"><svg width="8" height="2"><rect width="8" height="2" fill="#555b64" /></svg></RailButton>
          <RailButton $h={16} aria-label="Ruler"><svg width="12" height="11" viewBox="0 0 12 11" fill="#fff" stroke="#565c65"><path d="M.5.5h4v2h3v-1h4v9h-4v-2h-3v-2h-4zM4 4l4 4" /></svg></RailButton>
          <RailButton $h={15} aria-label="Scroll up"><svg width="9" height="5"><path d="M0 5h9L4.500 0z" fill="#444a53" /></svg></RailButton>
          <RailTrack>
            <RailThumb><svg width="8" height="8"><path d="M0 .5h8M0 2.500h8M0 4.500h8M0 6.500h8" stroke="#7b828c" /></svg></RailThumb>
          </RailTrack>
          <RailButton $h={15} aria-label="Scroll down"><svg width="9" height="5"><path d="M0 0h9L4.500 5z" fill="#444a53" /></svg></RailButton>
          <RailButton $h={16} aria-label="Previous page"><svg width="6" height="8"><path d="M0 3h6L3 0zM0 7h6L3 4z" fill="#333" /></svg></RailButton>
          <RailButton $h={16} aria-label="Browse object"><svg width="8" height="8"><circle cx="4" cy="4" r="3" fill="#e9ecf0" stroke="#444a53" /></svg></RailButton>
          <RailButton $h={17} aria-label="Next page"><svg width="6" height="8"><path d="M0 1h6L3 4zM0 5h6L3 8z" fill="#333" /></svg></RailButton>
        </ScrollRail>
        <Watermark><span>ANY</span><AnyRunIcon /><span>RUN</span></Watermark>
      </Workspace>

      <StatusBar>
        <StatusItem $w={77}>Page: 1 of 1</StatusItem>
        <StatusItem $w={75}>Words: 1/1</StatusItem>
        <PlainButton $w={34} aria-label="Proofing"><ProofIcon /></PlainButton>
        <StatusItem $w={84}>English (U.S.)</StatusItem>
        <StatusItem $w={35} aria-label="Record macro"><MacroIcon /></StatusItem>
        <ViewControls>
          <ViewButton $on aria-label="Print layout"><PageViewIcon /></ViewButton>
          <ViewButton aria-label="Full screen reading"><BookIcon /></ViewButton>
          <ViewButton aria-label="Web layout"><WebIcon /></ViewButton>
          <ViewButton aria-label="Outline"><OutlineIcon /></ViewButton>
          <ViewButton aria-label="Draft"><DraftIcon /></ViewButton>
          <ZoomLevel>100%</ZoomLevel>
          <PlainButton aria-label="Zoom out"><ZoomKnob /></PlainButton>
          <ZoomSlider type="range" min={0} max={100} defaultValue={50} aria-label="Zoom" />
          <PlainButton aria-label="Zoom in"><ZoomKnob plus /></PlainButton>
        </ViewControls>
      </StatusBar>

      <Taskbar>
        <StartButton><WindowsFlag />Start</StartButton>
        <TaskButton aria-label="Internet Explorer"><IeIcon /></TaskButton>
        <TaskButton $state="open" aria-label="Explorer"><FolderIcon /></TaskButton>
        <TaskButton aria-label="Media Player"><PlayerIcon /></TaskButton>
        <TaskButton $state="open" aria-label="Chrome"><ChromeIcon /></TaskButton>
        <TaskButton aria-label="Edge"><EdgeIcon /></TaskButton>
        <TaskButton $state="front" aria-label="Word"><WordIcon /></TaskButton>
        <Tray>
          <TrayButton $w={18} aria-label="Show hidden icons"><svg width="6" height="9" viewBox="0 0 6 9"><path d="M.5 3.500L3 1l2.500 2.500M.5 8L3 5.500 5.500 8" fill="none" stroke="#000" strokeWidth="1.300" /></svg></TrayButton>
          <TrayButton $w={24} aria-label="Volume"><SpeakerIcon /></TrayButton>
          <TrayButton $w={24} aria-label="Network"><NetworkIcon /></TrayButton>
          <TrayButton $w={26} aria-label="Action center"><FlagIcon /></TrayButton>
          <Clock>6:44 AM</Clock>
          <TrayButton $w={20} aria-label="Show desktop"><DesktopIcon /></TrayButton>
        </Tray>
      </Taskbar>
    </Window>
  );
}
